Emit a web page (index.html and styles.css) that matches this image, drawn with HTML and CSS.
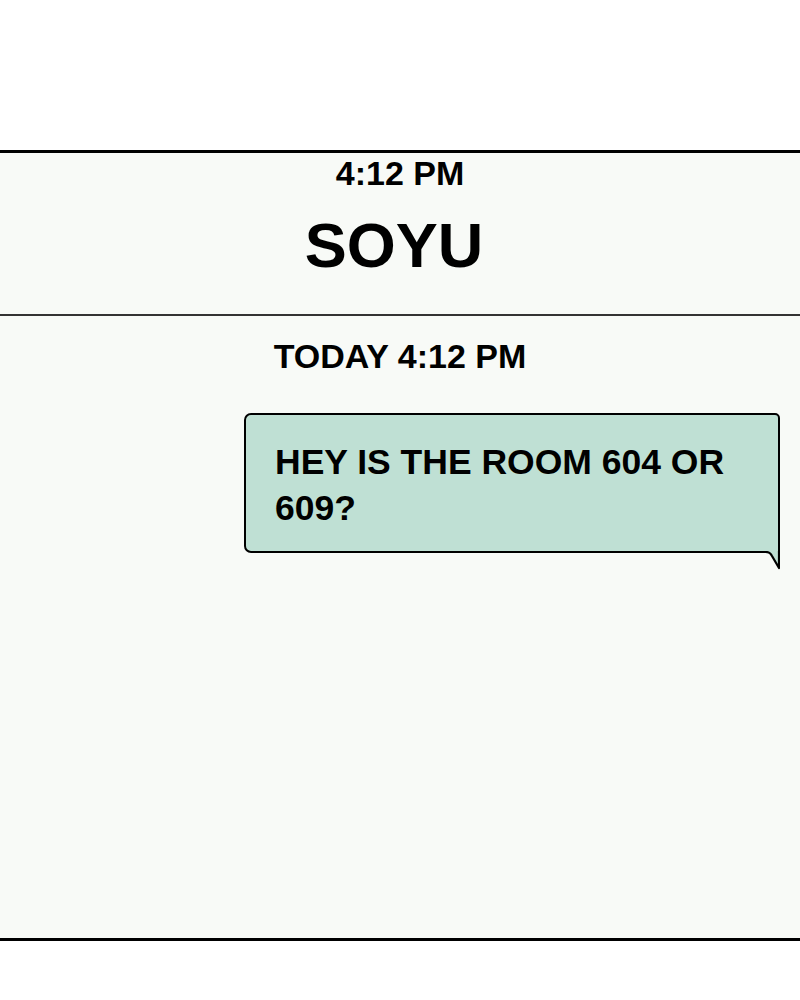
FILE: index.html
```html
<!DOCTYPE html>
<html lang="en">
<head>
  <meta charset="UTF-8">
  <meta name="viewport" content="width=device-width, initial-scale=1.0">
  <title>SOYU - Messages</title>
  <link rel="stylesheet" href="styles.css">
</head>
<body>
  <div class="phone">
    <div class="chat-header">
      <div class="clock">4:12 PM</div>
      <div class="contact">SOYU</div>
    </div>

    <div class="chat-body">
      <div class="stamp">TODAY 4:12 PM</div>
      <div class="bubble">
        HEY IS THE ROOM 604 OR 609?
        <svg class="tail" width="14" height="19" viewBox="0 0 14 19">
          <rect x="0" y="0" width="13" height="2.5" fill="#bfe0d4"/>
          <path d="M0 1 Q4 1 6 5 L13 17 L13 0" fill="#bfe0d4" stroke="#000" stroke-width="2.2" stroke-linejoin="round" stroke-linecap="round"/>
        </svg>
      </div>
    </div>
  </div>
</body>
</html>
```

FILE: styles.css
```css
body {
  font-family: "Liberation Sans", Arial, sans-serif;
  margin: 0;
  padding: 0;
  background-color: #fff;
  color: #000;
}
.phone {
  margin-top: 150px;
  height: 785px;
  border-top: 3px solid #000;
  border-bottom: 3px solid #000;
  background-color: #f8faf7;
}
.chat-header {
  height: 161px;
  border-bottom: 2px solid #333;
  text-align: center;
  font-weight: bold;
}
.clock {
  padding-top: 3px;
  font-size: 34px;
  line-height: 1;
}
.contact {
  margin-top: 24px;
  padding-right: 12px;
  font-size: 63px;
  line-height: 1;
}
.chat-body {
  padding-top: 23px;
}
.stamp {
  text-align: center;
  font-size: 34px;
  font-weight: bold;
  line-height: 1;
}
.bubble {
  position: relative;
  width: 473px;
  margin: 40px 20px 0 auto;
  padding: 24px 30px 20px 29px;
  background-color: #bfe0d4;
  border: 2px solid #000;
  border-radius: 7px 5px 0 7px;
  font-size: 35.5px;
  font-weight: bold;
  line-height: 46px;
}
.tail {
  position: absolute;
  right: -2px;
  top: 100%;
  display: block;
}
```
